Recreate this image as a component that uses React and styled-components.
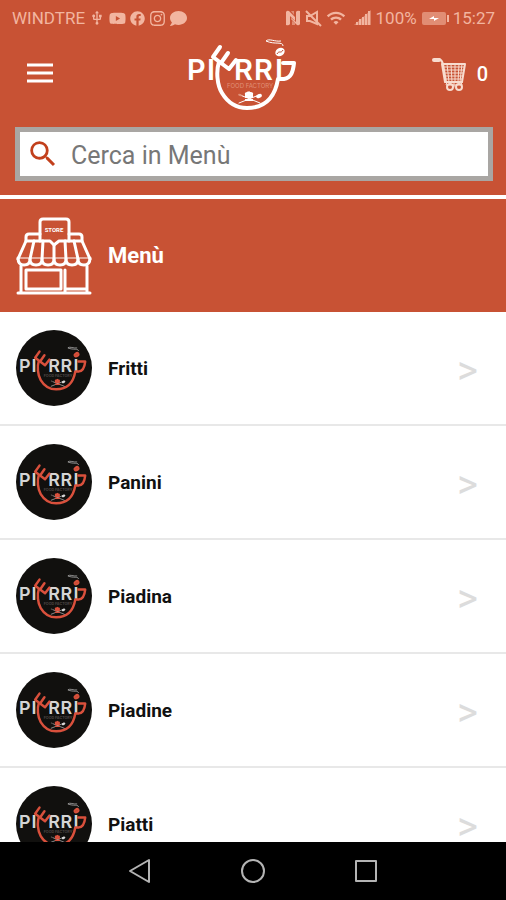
import React from 'react';
import styled, { createGlobalStyle } from 'styled-components';
import { FaYoutube, FaFacebook, FaInstagram, FaComment } from 'react-icons/fa';
import { MdUsb, MdWifi, MdSearch } from 'react-icons/md';

const GlobalStyle = createGlobalStyle`
    * {
        box-sizing: border-box;
    }

    body {
        margin: 0;
        background: #fff;
        font-family: Roboto, 'Liberation Sans', sans-serif;
    }
`
const Page = styled.div`
    display: flex;
    flex-direction: column;
    height: 100vh;
    overflow: hidden;
`
const Header = styled.header`
    flex: none;
    background: #c85234;
    color: #fff;
    padding-bottom: 14px;
    border-bottom: 4px solid #fff;
`
const StatusBar = styled.div`
    display: flex;
    justify-content: space-between;
    align-items: center;
    height: 36px;
    padding: 0 11px 0 12px;
    color: #f2b5a0;
    font-size: 17px;
`
const StatusGroup = styled.div`
    display: flex;
    align-items: center;
    gap: 4px;
`
const TopBar = styled.div`
    display: grid;
    grid-template-columns: 1fr auto 1fr;
    align-items: center;
    height: 76px;
    padding: 0 18px 0 24px;
`
const IconButton = styled.button`
    display: flex;
    align-items: center;
    gap: 10px;
    justify-self: ${props => props.$side};
    padding: 0;
    border: 0;
    background: none;
    color: #fff;
    font: 500 20px Roboto, sans-serif;
    cursor: pointer;
`
const SearchForm = styled.form`
    display: flex;
    align-items: center;
    gap: 11px;
    height: 54px;
    margin: 15px 13px 0 15px;
    padding: 0 6px;
    border: 5px solid #a9a6a3;
    background: #fff;
    color: #c2401c;
`
const SearchInput = styled.input`
    flex: 1;
    min-width: 0;
    padding: 2px 0 0;
    border: 0;
    outline: 0;
    background: none;
    color: #333;
    font: 25px Roboto, sans-serif;

    &::placeholder {
        color: #777;
        opacity: 1;
    }
`
const SectionTitle = styled.div`
    display: flex;
    flex: none;
    align-items: center;
    gap: 16px;
    height: 113px;
    padding: 0 16px;
    background: #c85234;
    color: #fff;
`
const Title = styled.h1`
    margin: 0;
    font-size: 22px;
    font-weight: 700;
`
const List = styled.ul`
    flex: 1;
    min-height: 0;
    margin: 0;
    padding: 0;
    overflow: hidden;
    list-style: none;
`
const Row = styled.a`
    display: flex;
    align-items: center;
    gap: 16px;
    height: 114px;
    padding: 0 28px 0 16px;
    border-bottom: 2px solid #e8e8e8;
    color: #111;
    font-size: 19px;
    font-weight: 700;
    text-decoration: none;
`
const RowName = styled.span`
    flex: 1;
`
const Arrow = styled.span`
    padding-top: 5px;
    color: #dcdcdc;
    font-size: 40px;
    font-weight: 400;
    line-height: 28px;
`
const Badge = styled.span`
    display: flex;
    width: 76px;
    height: 76px;
    border-radius: 50%;
    overflow: hidden;
    background: #11100e;
`
const NavBar = styled.nav`
    display: flex;
    flex: none;
    justify-content: center;
    align-items: center;
    gap: 85px;
    height: 58px;
    background: #000;
`
const NavButton = styled.button`
    display: flex;
    padding: 0;
    border: 0;
    background: none;
    color: #b4b4b4;
    cursor: pointer;
`

const items = ['Fritti', 'Panini', 'Piadina', 'Piadine', 'Piatti'];

function Logo({ width, height, viewBox, text = '#fff', cup = '#fff', faint = '#e08f76' }) {
    return (
        <svg width={width} height={height} viewBox={viewBox} role="img" aria-label="Pierri Food Factory">
            <g fill={text} fontFamily="Inter, sans-serif" fontWeight="600" fontSize="29">
                <text x="16" y="51">P</text>
                <text x="36" y="51">I</text>
                <text x="63" y="51">R</text>
                <text x="83" y="51">R</text>
                <text x="104" y="51">I</text>
            </g>
            {/* fork, its handle runs into the bowl of the cup */}
            <g fill="none" stroke={cup} strokeLinecap="round" strokeLinejoin="round">
                <path d="M49 18L42 28L58 40L65 31M50 34L57 24" strokeWidth="4" />
                <path d="M48 33C45 42 46 56 51 64C57 74 66 79 76 79C94 79 104 68 107 50H113C120 49 122 43 123 34H112" strokeWidth="4" />
            </g>
            <ellipse cx="109" cy="23" rx="5" ry="4" fill={cup} transform="rotate(-35 109 23)" />
            <path d="M106 25C108 21 110 25 112 21" fill="none" stroke="#b9492e" strokeWidth="1" />
            <path d="M112 17C112 12 104 16 95 12C98 9 104 13 110 12" fill="none" stroke={text} strokeWidth="1" />
            <text x="79" y="59" textAnchor="middle" fill={faint} fontFamily="Inter, sans-serif" fontSize="6">FOOD FACTORY</text>
            <path d="M69 66L89 74M88 66L68 74" stroke={text} strokeWidth="1" strokeLinecap="round" />
            <path d="M74 66C73 62 77 64 78 62C79 64 83 62 82 66V69H74Z" fill={cup} />
            <path d="M74 71H82" stroke={cup} strokeWidth="2" />
            <ellipse cx="88" cy="67" rx="3" ry="2" fill={text} transform="rotate(-25 88 67)" />
            <ellipse cx="69" cy="66" rx="2" ry="1" fill={faint} transform="rotate(25 69 66)" />
        </svg>
    )
}

function StoreIcon() {
    return (
        <svg width="76" height="78" viewBox="0 0 76 78" fill="none" stroke="#fff" strokeWidth="3" strokeLinejoin="round" strokeLinecap="round" aria-hidden="true">
            <path d="M24 24V5Q24 2 27 2H50Q53 2 53 5V24H43L38 28L34 24Z" />
            <path d="M24 17H13Q10 17 10 20V24M53 17H63Q66 17 66 20V24M10 24H24M53 24H66" />
            <path d="M10 24L2 42M66 24L74 42M18 24L14 42M27 24L26 42M38 28V42M49 24L50 42M58 24L62 42" />
            <path d="M2 41H74" strokeWidth="1" />
            <path d="M2 41Q2 48 8 48Q14 48 14 42Q14 48 20 48Q26 48 26 42Q26 48 32 48Q38 48 38 42Q38 48 44 48Q50 48 50 42Q50 48 56 48Q62 48 62 42Q62 48 68 48Q74 48 74 41" />
            <path d="M5 49V76M71 49V76M2 76H74M10 53H45V72H10ZM49 53V76M49 72H71" />
            <text x="38" y="15" textAnchor="middle" fill="#fff" stroke="none" fontSize="6" fontWeight="700" fontFamily="Roboto, sans-serif">STORE</text>
        </svg>
    )
}

function CartIcon() {
    return (
        <svg width="36" height="36" viewBox="0 0 36 36" fill="none" stroke="#f8dccf" strokeLinecap="round" strokeLinejoin="round" aria-hidden="true">
            <path d="M3 4H8" strokeWidth="4" />
            <path d="M8 3Q11 4 12 8L15 26H31" strokeWidth="2" />
            <path d="M11 8H34L31 26H14Z" strokeWidth="2" />
            <path d="M12 11H33M13 14H33M13 17H32M14 20H32M14 23H31M16 8L18 26M20 8L21 26M24 8V26M28 8L27 26M31 8L29 26" strokeWidth="1" />
            <path d="M16 26L15 29H31L30 26M23 27V31" strokeWidth="1" />
            <circle cx="19" cy="31" r="3" strokeWidth="2" />
            <circle cx="28" cy="31" r="3" strokeWidth="2" />
        </svg>
    )
}

export default function App() {
    return (
        <Page>
            <GlobalStyle />
            <Header>
                <StatusBar>
                    <StatusGroup>
                        <span>WINDTRE</span>
                        <MdUsb size={16} />
                        <FaYoutube size={17} />
                        <FaFacebook size={15} />
                        <FaInstagram size={17} />
                        <FaComment size={17} />
                    </StatusGroup>
                    <StatusGroup>
                        <svg width="16" height="16" viewBox="0 0 16 16" fill="currentColor" aria-hidden="true">
                            <path d="M1 2Q2 0 4 1L10 7V11L5 6V14Q4 16 1 15Z" />
                            <path d="M15 14Q14 16 12 15L6 9V8L11 12V2Q12 0 15 1Z" />
                            <path d="M6 1H9V5ZM7 15H10V13L7 11Z" opacity="0.6" />
                        </svg>
                        <svg width="17" height="17" viewBox="0 0 17 17" fill="none" stroke="currentColor" strokeWidth="2" aria-hidden="true">
                            <path d="M2 6H5L12 2V14L5 11H2ZM1 1L16 16" />
                        </svg>
                        <MdWifi size={20} />
                        <svg width="22" height="16" viewBox="3 0 22 16" fill="currentColor" aria-hidden="true">
                            <path d="M9 12H11V15H9ZM12 9H14V15H12ZM15 7H17V15H15ZM18 4H20V15H18ZM21 1H23V15H21Z" />
                            <path d="M7 15L24 0V15Z" opacity="0.5" />
                        </svg>
                        <span>100%</span>
                        <svg width="28" height="16" viewBox="0 0 28 16" fill="currentColor" aria-hidden="true">
                            <rect x="1" y="2" width="24" height="13" rx="2" opacity="0.6" />
                            <path d="M26 5H28V12H26Z" />
                            <path d="M8 9L13 6V8H18L13 11V9Z" fill="#fff" />
                        </svg>
                        <span>15:27</span>
                    </StatusGroup>
                </StatusBar>
                <TopBar>
                    <IconButton $side="start" aria-label="Apri menu">
                        <svg width="32" height="24" viewBox="0 0 32 24" stroke="currentColor" strokeWidth="3" aria-hidden="true">
                            <path d="M3 3H29M3 11H29M3 19H29" />
                        </svg>
                    </IconButton>
                    <Logo width="138" height="76" viewBox="16 7 138 76" />
                    <IconButton $side="end" aria-label="Carrello: 0">
                        <CartIcon />
                        <span>0</span>
                    </IconButton>
                </TopBar>
                <SearchForm role="search">
                    <MdSearch size={34} />
                    <SearchInput type="search" aria-label="Cerca in Menù" placeholder="Cerca in Menù" />
                </SearchForm>
            </Header>
            <SectionTitle>
                <StoreIcon />
                <Title>Menù</Title>
            </SectionTitle>
            <List>
                {items.map(item => (
                    <li key={item}>
                        <Row href={`#${item.toLowerCase()}`}>
                            <Badge>
                                <Logo width="76" height="76" viewBox="11 -17 123 123" text="#d5d5d5" cup="#d9503c" faint="#4c4643" />
                            </Badge>
                            <RowName>{item}</RowName>
                            <Arrow aria-hidden="true">&gt;</Arrow>
                        </Row>
                    </li>
                ))}
            </List>
            <NavBar>
                <NavButton aria-label="Indietro">
                    <svg width="28" height="28" viewBox="0 0 28 28" fill="none" stroke="currentColor" strokeWidth="2">
                        <path d="M23 3V25L4 14Z" strokeLinejoin="round" />
                    </svg>
                </NavButton>
                <NavButton aria-label="Home">
                    <svg width="28" height="28" viewBox="0 0 28 28" fill="none" stroke="currentColor" strokeWidth="2">
                        <circle cx="14" cy="14" r="11" />
                    </svg>
                </NavButton>
                <NavButton aria-label="Recenti">
                    <svg width="28" height="28" viewBox="0 0 28 28" fill="none" stroke="currentColor" strokeWidth="2">
                        <path d="M4 4H24V24H4Z" strokeLinejoin="round" />
                    </svg>
                </NavButton>
            </NavBar>
        </Page>
    )
}
